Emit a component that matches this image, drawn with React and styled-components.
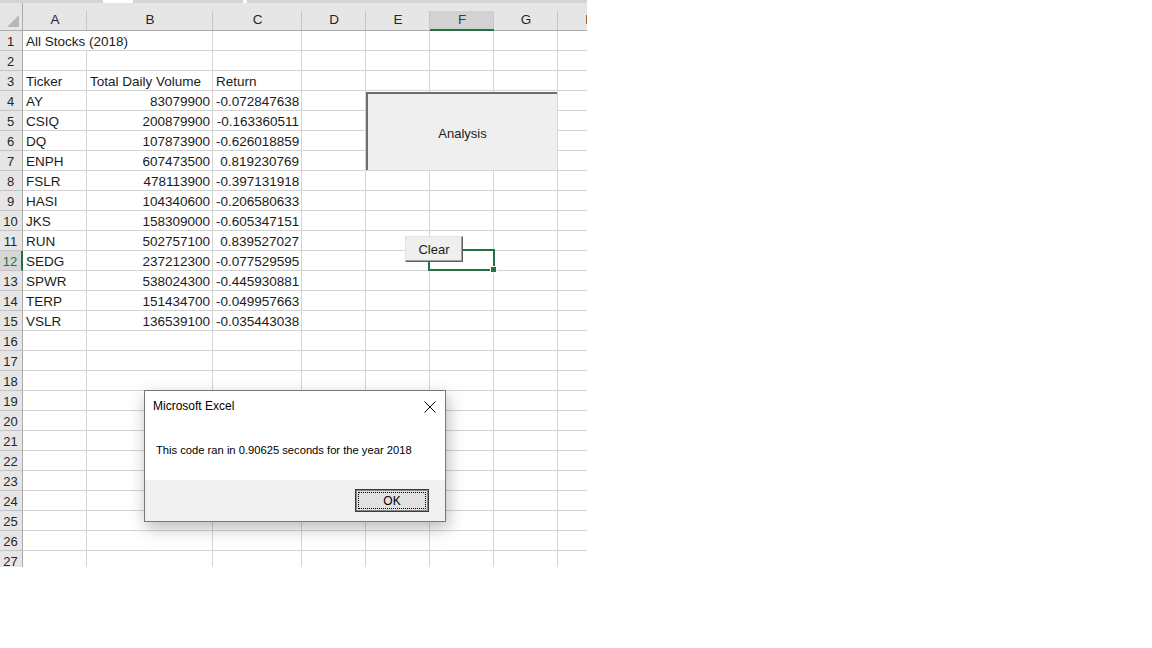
import React from "react";
import styled, { createGlobalStyle } from "styled-components";

const GlobalStyle = createGlobalStyle`
  body {
    margin: 0;
    background: #fff;
    font-family: "Liberation Sans", Arial, sans-serif;
  }
`;

const GREEN = "#217346";

const Page = styled.div`
  position: relative;
  width: 1152px;
  height: 648px;
  overflow: hidden;
  background: #fff;
`;

const Sheet = styled.div`
  width: 587px;
  height: 567px;
  overflow: hidden;
`;

const TopStrip = styled.div`
  display: flex;
  height: 3px;
  width: 622px;
`;

const StripSeg = styled.div`
  width: ${(p) => p.$w}px;
  background: ${(p) => (p.$gap ? "#fff" : "#d4d4d4")};
`;

const Grid = styled.div`
  display: grid;
  grid-template-columns: 23px 64px 126px 89px 64px 64px 64px 64px 64px;
  grid-template-rows: 28px repeat(27, 20px);
  width: 622px;
  font-size: 13.5px;
  color: #1b1b1b;
`;

const Corner = styled.div`
  display: flex;
  justify-content: flex-end;
  align-items: flex-end;
  padding: 0 3px 3px 0;
  background: #e6e6e6;
  border-right: 1px solid #ababab;
  border-bottom: 1px solid #ababab;
`;

const ColHeader = styled.div`
  position: relative;
  box-sizing: border-box;
  padding-top: 7px;
  line-height: 20px;
  text-align: center;
  color: ${(p) => (p.$selected ? "#1e4d33" : "#262626")};
  background: ${(p) =>
    p.$selected
      ? "linear-gradient(#e6e6e6 8px, #d2d2d2 8px)"
      : "#e6e6e6"};
  border-bottom: ${(p) => (p.$selected ? `2px solid ${GREEN}` : "1px solid #ababab")};

  &::after {
    content: "";
    position: absolute;
    right: 0;
    top: 8px;
    bottom: 0;
    width: 1px;
    background: #c6c6c6;
  }
`;

const RowHeader = styled.div`
  box-sizing: border-box;
  padding: 2px 1px 0 0;
  line-height: 18px;
  text-align: center;
  font-size: 13px;
  color: ${(p) => (p.$selected ? GREEN : "#262626")};
  background: ${(p) => (p.$selected ? "#d6d6d6" : "#e6e6e6")};
  border-right: ${(p) => (p.$selected ? `2px solid ${GREEN}` : "1px solid #ababab")};
  border-bottom: 1px solid #c4c4c4;
`;

const Cell = styled.div`
  box-sizing: border-box;
  grid-column: span ${(p) => p.$span || 1};
  padding: 2px 2px 0 3px;
  line-height: 18px;
  white-space: nowrap;
  text-align: ${(p) => p.$align || "left"};
  border-right: 1px solid #d4d4d4;
  border-bottom: 1px solid #d4d4d4;
`;

const AnalysisButton = styled.div`
  position: absolute;
  left: 366px;
  top: 92px;
  width: 191px;
  height: 78px;
  box-sizing: border-box;
  display: flex;
  align-items: center;
  justify-content: center;
  padding-top: 2px;
  background: #efefef;
  border-top: 2px solid #6e6e6e;
  border-left: 2px solid #6e6e6e;
  font-size: 13px;
  color: #1b1b1b;
`;

const ClearButton = styled.div`
  position: absolute;
  left: 405px;
  top: 236px;
  width: 58px;
  height: 26px;
  box-sizing: border-box;
  display: flex;
  align-items: center;
  justify-content: center;
  background: #efefef;
  border-top: 1px solid #e2e2e2;
  border-left: 1px solid #e2e2e2;
  border-right: 1px solid #5e5e5e;
  border-bottom: 1px solid #5e5e5e;
  box-shadow: inset -1px -1px 0 #a0a0a0;
  font-size: 13px;
  color: #1b1b1b;
  z-index: 2;
`;

const Selection = styled.div`
  position: absolute;
  left: 428px;
  top: 249px;
  width: 67px;
  height: 22px;
  box-sizing: border-box;
  border: 2px solid ${GREEN};
  z-index: 1;
`;

const FillHandle = styled.div`
  position: absolute;
  right: -4px;
  bottom: -4px;
  width: 5px;
  height: 5px;
  background: ${GREEN};
  border: 1px solid #fff;
`;

const Dialog = styled.div`
  position: absolute;
  left: 144px;
  top: 390px;
  width: 302px;
  height: 132px;
  box-sizing: border-box;
  display: flex;
  flex-direction: column;
  background: #fff;
  border: 1px solid #777;
  box-shadow: 2px 6px 16px rgba(0, 0, 0, 0.28);
  z-index: 3;
`;

const TitleBar = styled.div`
  display: flex;
  align-items: center;
  justify-content: space-between;
  height: 30px;
  padding: 0 9px 0 8px;
  font-size: 12px;
  color: #000;
`;

const CloseIcon = styled.svg`
  width: 12px;
  height: 12px;
  margin-top: 2px;
`;

const Message = styled.div`
  display: flex;
  align-items: center;
  height: 57px;
  padding: 0 0 2px 11px;
  font-size: 11.2px;
  color: #000;
`;

const Footer = styled.div`
  flex: 1;
  display: flex;
  align-items: center;
  justify-content: flex-end;
  padding-right: 16px;
  background: #f0f0f0;
`;

const OkButton = styled.div`
  width: 74px;
  height: 23px;
  box-sizing: border-box;
  display: flex;
  align-items: center;
  justify-content: center;
  background: #e1e1e1;
  border: 1px solid #3c3c3c;
  box-shadow: inset 0 0 0 1px #8a8a8a;
  outline: 1px dotted #000;
  outline-offset: -4px;
  font-size: 12px;
  color: #000;
`;

const COLS = ["A", "B", "C", "D", "E", "F", "G", "H"];

const stocks = [
  ["AY", "83079900", "-0.072847638"],
  ["CSIQ", "200879900", "-0.163360511"],
  ["DQ", "107873900", "-0.626018859"],
  ["ENPH", "607473500", "0.819230769"],
  ["FSLR", "478113900", "-0.397131918"],
  ["HASI", "104340600", "-0.206580633"],
  ["JKS", "158309000", "-0.605347151"],
  ["RUN", "502757100", "0.839527027"],
  ["SEDG", "237212300", "-0.077529595"],
  ["SPWR", "538024300", "-0.445930881"],
  ["TERP", "151434700", "-0.049957663"],
  ["VSLR", "136539100", "-0.035443038"],
];

const blanks = (n, key) =>
  Array.from({ length: n }, (_, i) => <Cell key={`${key}-${i}`} />);

function rowCells(r) {
  if (r === 1) {
    return [
      <Cell key="a" $span={2}>
        All Stocks (2018)
      </Cell>,
      ...blanks(6, r),
    ];
  }
  if (r === 3) {
    return [
      <Cell key="a">Ticker</Cell>,
      <Cell key="b">Total Daily Volume</Cell>,
      <Cell key="c">Return</Cell>,
      ...blanks(5, r),
    ];
  }
  const s = stocks[r - 4];
  if (s) {
    return [
      <Cell key="a">{s[0]}</Cell>,
      <Cell key="b" $align="right">
        {s[1]}
      </Cell>,
      <Cell key="c" $align="right">
        {s[2]}
      </Cell>,
      ...blanks(5, r),
    ];
  }
  return blanks(8, r);
}

const App = () => {
  const rows = Array.from({ length: 27 }, (_, i) => i + 1);
  return (
    <Page>
      <GlobalStyle />
      <Sheet>
        <TopStrip>
          <StripSeg $w={103} />
          <StripSeg $w={30} $gap />
          <StripSeg $w={110} />
          <StripSeg $w={4} $gap />
          <StripSeg $w={375} />
        </TopStrip>
        <Grid>
          <Corner>
            <svg width="12" height="12" viewBox="0 0 12 12">
              <polygon points="12,0 12,12 0,12" fill="#b7b7b7" />
            </svg>
          </Corner>
          {COLS.map((c) => (
            <ColHeader key={c} $selected={c === "F"}>
              {c}
            </ColHeader>
          ))}
          {rows.map((r) => (
            <React.Fragment key={r}>
              <RowHeader $selected={r === 12}>{r}</RowHeader>
              {rowCells(r)}
            </React.Fragment>
          ))}
        </Grid>
      </Sheet>

      <AnalysisButton>Analysis</AnalysisButton>
      <Selection>
        <FillHandle />
      </Selection>
      <ClearButton>Clear</ClearButton>

      <Dialog>
        <TitleBar>
          <span>Microsoft Excel</span>
          <CloseIcon viewBox="0 0 12 12">
            <path d="M0.5 0.5 L11.5 11.5 M11.5 0.5 L0.5 11.5" stroke="#000" strokeWidth="1" fill="none" />
          </CloseIcon>
        </TitleBar>
        <Message>This code ran in 0.90625 seconds for the year 2018</Message>
        <Footer>
          <OkButton>OK</OkButton>
        </Footer>
      </Dialog>
    </Page>
  );
};

export default App;
